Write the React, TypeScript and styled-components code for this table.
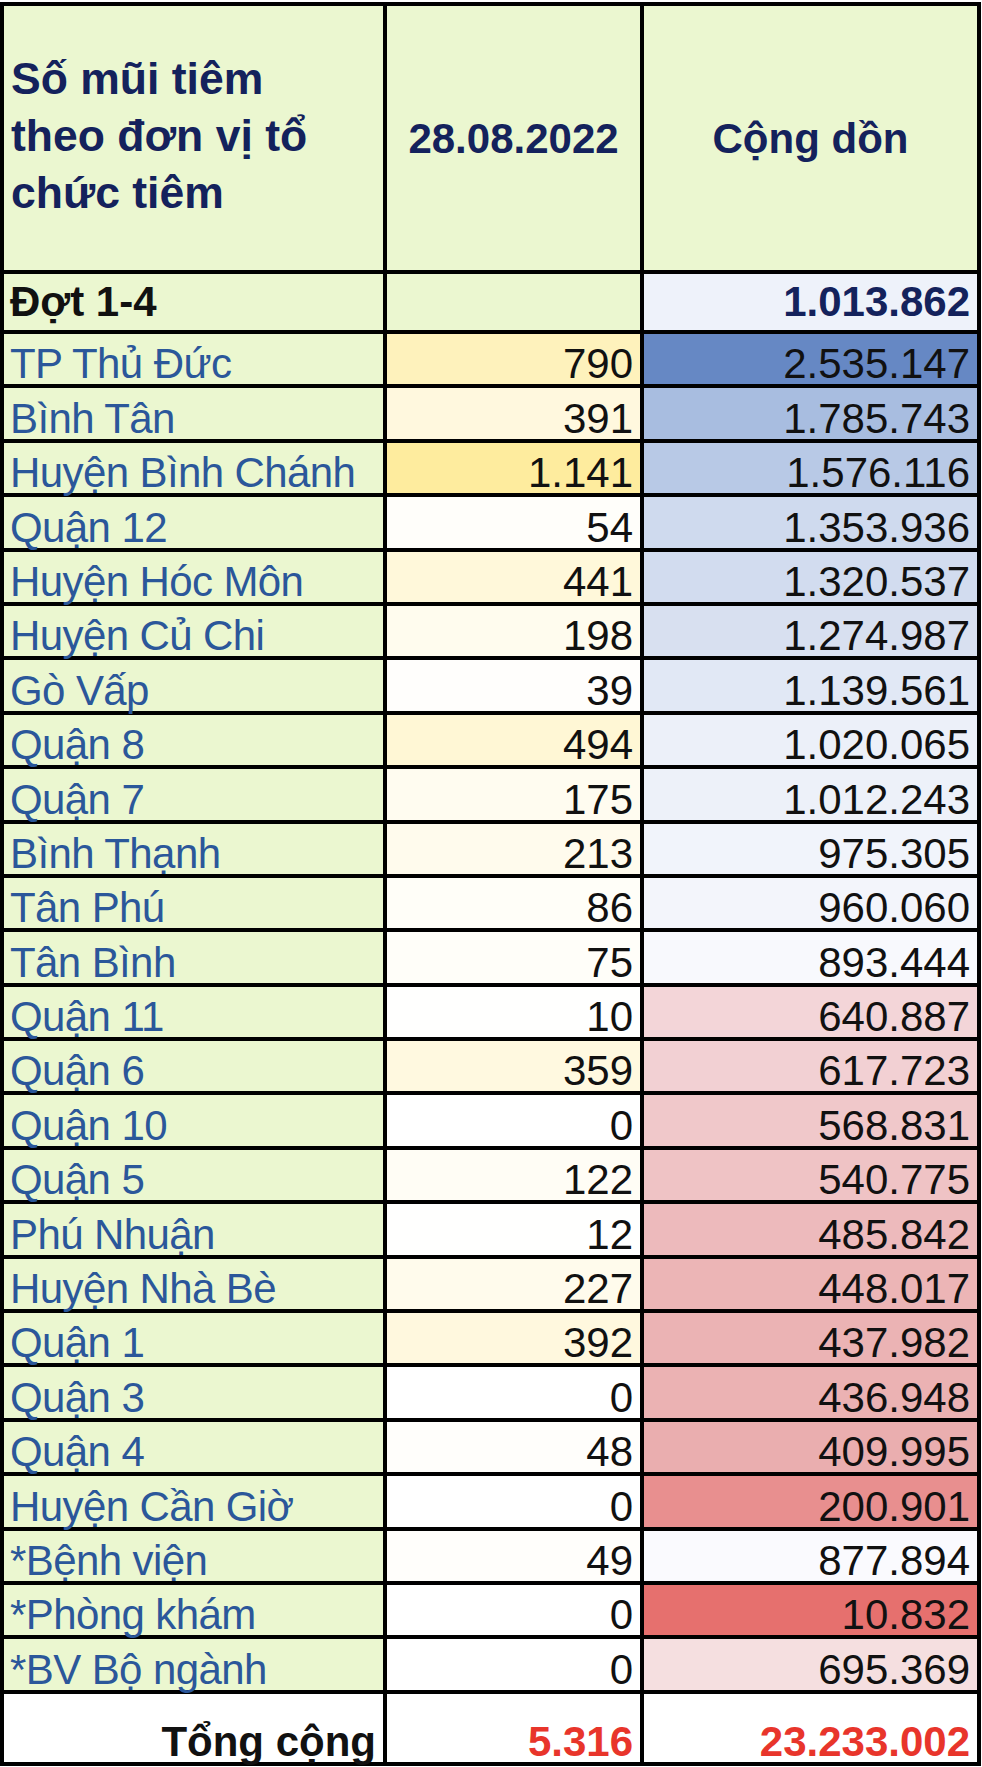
import React from 'react';
import styled, {createGlobalStyle} from "styled-components";

const GlobalStyle = createGlobalStyle`
  html, body {
    margin: 0;
    padding: 0;
    background: #ffffff;
  }
  body {
    font-family: "Liberation Sans", Arial, sans-serif;
  }
`;

const GREEN = '#ebf7d0';

// cột 28.08.2022: thang màu trắng -> vàng theo giá trị
const yellowScale = (v: number) => {
    const t = v / 1141;
    const mix = (a: number, b: number) => Math.round(a + (b - a) * t);
    return `rgb(${mix(255, 254)}, ${mix(255, 236)}, ${mix(255, 158)})`;
};

type Row = { name: string; day: number; dayText: string; total: string; bg: string };

const rows: Row[] = [
    {name: 'TP Thủ Đức', day: 790, dayText: '790', total: '2.535.147', bg: '#6688c4'},
    {name: 'Bình Tân', day: 391, dayText: '391', total: '1.785.743', bg: '#a8bde0'},
    {name: 'Huyện Bình Chánh', day: 1141, dayText: '1.141', total: '1.576.116', bg: '#b8c9e6'},
    {name: 'Quận 12', day: 54, dayText: '54', total: '1.353.936', bg: '#cfdaee'},
    {name: 'Huyện Hóc Môn', day: 441, dayText: '441', total: '1.320.537', bg: '#d2dcef'},
    {name: 'Huyện Củ Chi', day: 198, dayText: '198', total: '1.274.987', bg: '#d8e0f0'},
    {name: 'Gò Vấp', day: 39, dayText: '39', total: '1.139.561', bg: '#e1e8f5'},
    {name: 'Quận 8', day: 494, dayText: '494', total: '1.020.065', bg: '#ecf0f9'},
    {name: 'Quận 7', day: 175, dayText: '175', total: '1.012.243', bg: '#edf1f9'},
    {name: 'Bình Thạnh', day: 213, dayText: '213', total: '975.305', bg: '#f1f4fb'},
    {name: 'Tân Phú', day: 86, dayText: '86', total: '960.060', bg: '#f3f5fb'},
    {name: 'Tân Bình', day: 75, dayText: '75', total: '893.444', bg: '#f8f9fd'},
    {name: 'Quận 11', day: 10, dayText: '10', total: '640.887', bg: '#f3d5d8'},
    {name: 'Quận 6', day: 359, dayText: '359', total: '617.723', bg: '#f2d0d3'},
    {name: 'Quận 10', day: 0, dayText: '0', total: '568.831', bg: '#f0c8ca'},
    {name: 'Quận 5', day: 122, dayText: '122', total: '540.775', bg: '#efc3c5'},
    {name: 'Phú Nhuận', day: 12, dayText: '12', total: '485.842', bg: '#edbabc'},
    {name: 'Huyện Nhà Bè', day: 227, dayText: '227', total: '448.017', bg: '#ecb5b6'},
    {name: 'Quận 1', day: 392, dayText: '392', total: '437.982', bg: '#ebb3b4'},
    {name: 'Quận 3', day: 0, dayText: '0', total: '436.948', bg: '#ebb2b3'},
    {name: 'Quận 4', day: 48, dayText: '48', total: '409.995', bg: '#eaaeaf'},
    {name: 'Huyện Cần Giờ', day: 0, dayText: '0', total: '200.901', bg: '#e88f8f'},
    {name: '*Bệnh viện', day: 49, dayText: '49', total: '877.894', bg: '#fafafe'},
    {name: '*Phòng khám', day: 0, dayText: '0', total: '10.832', bg: '#e6706e'},
    {name: '*BV Bộ ngành', day: 0, dayText: '0', total: '695.369', bg: '#f5dfe0'},
];

const Sheet = styled.div`
  display: grid;
  grid-template-columns: 379px 253px 333px;
  grid-template-rows: 264px 56px repeat(25, 50.4px) 68px;
  gap: 4px;
  padding: 4px;
  margin-top: 2px;
  width: max-content;
  background: #000;
`;

const HeaderCell = styled.div<{ $center?: boolean }>`
  display: flex;
  align-items: center;
  justify-content: ${p => (p.$center ? 'center' : 'flex-start')};
  padding: 0 7px;
  background: ${GREEN};
  color: #14225c;
  font-size: 42px;
  font-weight: bold;
  line-height: 57px;
`;

const HeaderTitle = styled.span`
  font-size: 44.5px;
  line-height: 57px;
  padding-bottom: 5px;
`;

const Cell = styled.div<{ $bg?: string; $right?: boolean; $bold?: boolean; $color?: string; $middle?: boolean }>`
  display: flex;
  align-items: ${p => (p.$middle ? 'center' : 'flex-end')};
  justify-content: ${p => (p.$right ? 'flex-end' : 'flex-start')};
  padding: 0 7px 0 6px;
  background: ${p => p.$bg || '#ffffff'};
  color: ${p => p.$color || '#111111'};
  font-size: 42px;
  font-weight: ${p => (p.$bold ? 'bold' : 'normal')};
  line-height: 40px;
  white-space: nowrap;
`;

const NameCell = styled(Cell)`
  background: ${GREEN};
  color: #2b579a;
  padding-left: 6px;
  letter-spacing: -0.6px;
`;

const App = () => {
    return (
        <>
            <GlobalStyle/>
            <Sheet>
                <HeaderCell>
                    <HeaderTitle>Số mũi tiêm<br/>theo đơn vị tổ<br/>chức tiêm</HeaderTitle>
                </HeaderCell>
                <HeaderCell $center>28.08.2022</HeaderCell>
                <HeaderCell $center>Cộng dồn</HeaderCell>

                <Cell $bg={GREEN} $bold $middle>Đợt 1-4</Cell>
                <Cell $bg={GREEN}/>
                <Cell $bg="#eef2fa" $right $bold $middle $color="#14225c">1.013.862</Cell>

                {rows.map((row, index) => (
                    <React.Fragment key={`row${index}`}>
                        <NameCell>{row.name}</NameCell>
                        <Cell $right $bg={yellowScale(row.day)}>{row.dayText}</Cell>
                        <Cell $right $bg={row.bg}>{row.total}</Cell>
                    </React.Fragment>
                ))}

                <Cell $right $bold>Tổng cộng</Cell>
                <Cell $right $bold $color="#e8352b">5.316</Cell>
                <Cell $right $bold $color="#e8352b">23.233.002</Cell>
            </Sheet>
        </>
    );
};

export default App;
